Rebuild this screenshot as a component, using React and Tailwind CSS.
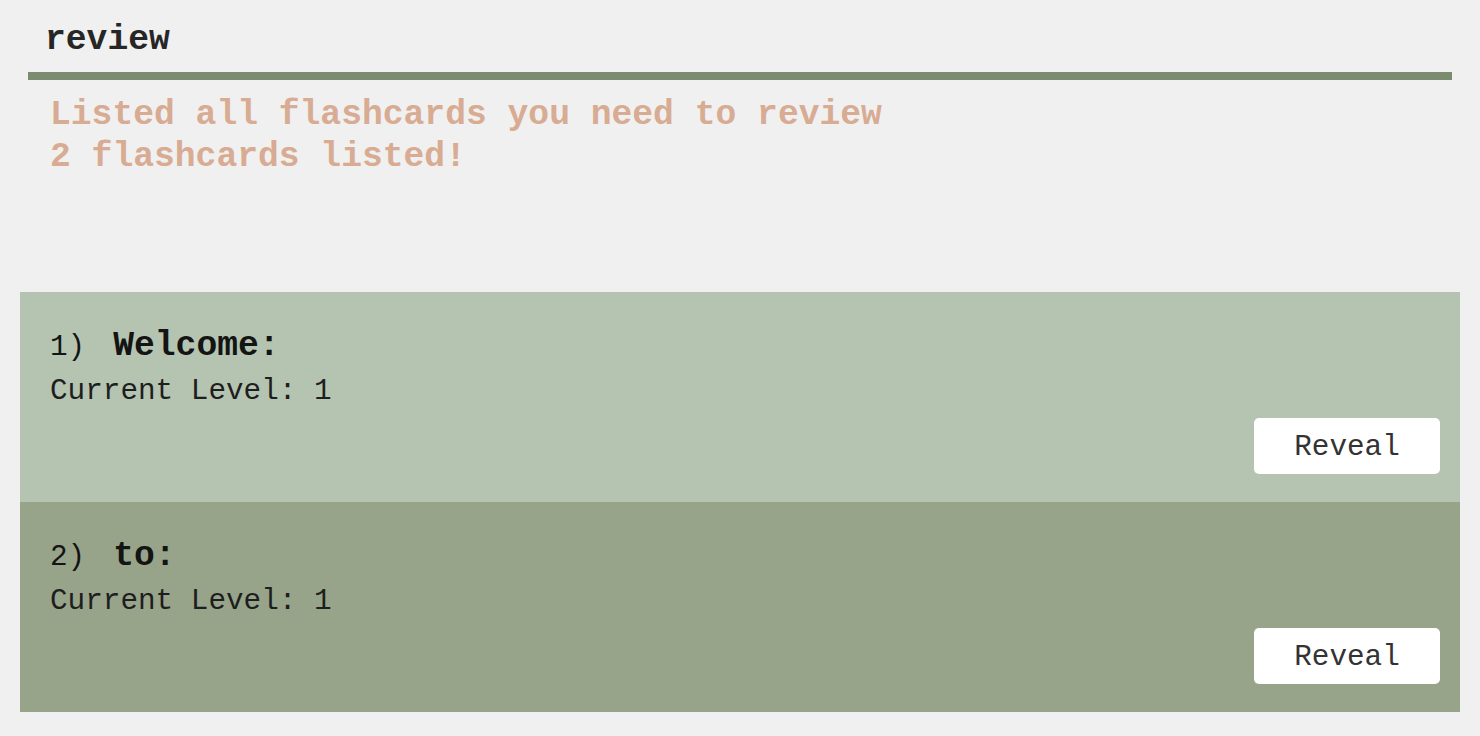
const cards = [
  { id: 1, question: "Welcome:", level: 1, bg: "bg-[#b5c4b1]" },
  { id: 2, question: "to:", level: 1, bg: "bg-[#97a48a]" },
];

function Card({ index, question, level, bg }) {
  return (
    <div className={`${bg} h-[210px] px-[30px] pt-[32px] pb-[28px] flex flex-col`}>
      <div className="flex items-baseline h-[43px] text-[#141414]">
        <span className="text-[29.33px] leading-[43px]">{index})</span>
        <span className="ml-[28px] text-[34.67px] leading-[43px] font-bold">{question}</span>
      </div>
      <div className="mt-[5px] text-[29.33px] leading-[40px] text-[#1e1e1e]">Current Level: {level}</div>
      <div className="mt-auto flex justify-end mr-[-10px]">
        <button className="w-[186px] h-[56px] pt-[3px] bg-white rounded-[5px] text-[29.33px] text-[#333333] leading-none">
          Reveal
        </button>
      </div>
    </div>
  );
}

export default function App() {
  return (
    <div
      className="min-h-[736px] bg-[#f0f0f0] pt-[19px]"
      style={{ fontFamily: '"Liberation Mono", "Courier New", monospace' }}
    >
      <div className="mx-[28px]">
        <div className="pl-[17px] text-[34.67px] leading-[42px] font-bold text-[#262626]">review</div>
        <div className="mt-[11px] h-[8px] bg-[#7b8b6f]" />
        <div className="pl-[22px] pt-[14px] h-[212px] text-[34.67px] leading-[42px] font-bold text-[#d8ab93]">
          <div>Listed all flashcards you need to review</div>
          <div>2 flashcards listed!</div>
        </div>
      </div>
      <div className="mx-[20px] flex flex-col">
        {cards.map((c) => (
          <Card key={c.id} index={c.id} question={c.question} level={c.level} bg={c.bg} />
        ))}
      </div>
    </div>
  );
}
